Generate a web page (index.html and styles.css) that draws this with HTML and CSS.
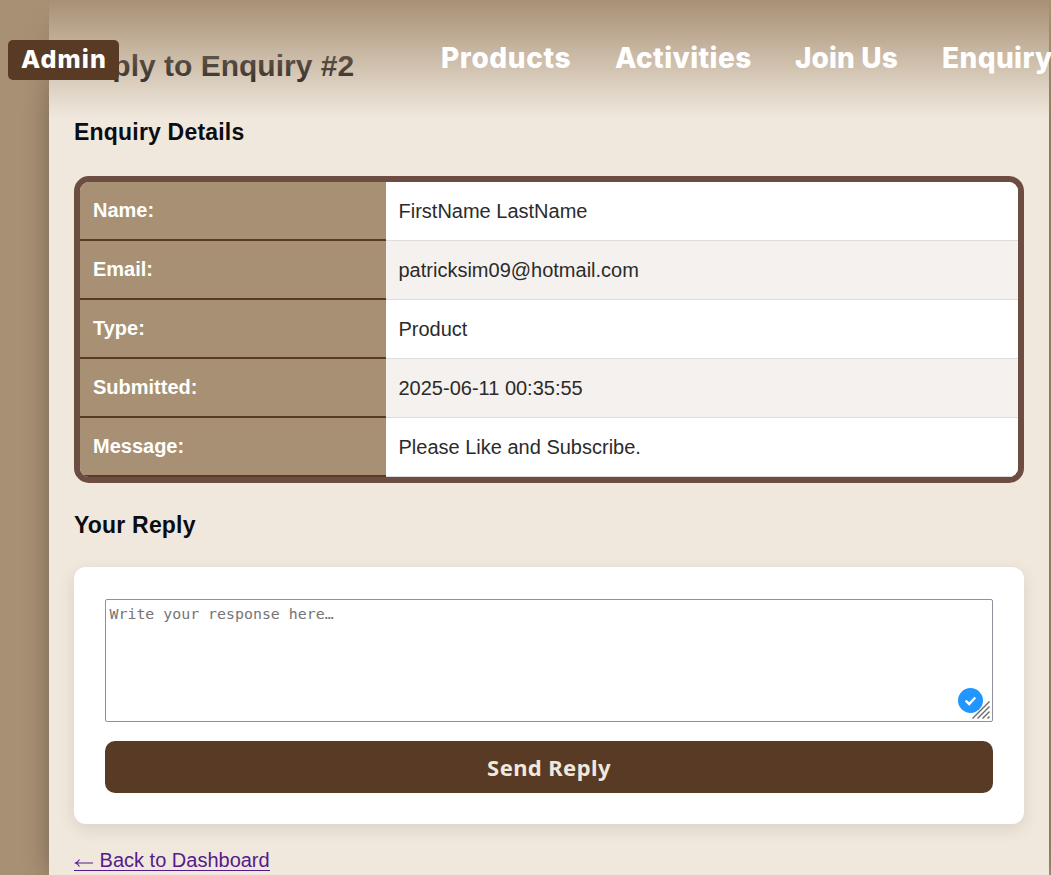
FILE: index.html
```html
<!DOCTYPE html>
<html lang="en">
<head>
<meta charset="utf-8">
<title>Reply to Enquiry</title>
<link rel="stylesheet" href="styles.css">
</head>
<body>
<header class="topbar">
  <a class="admin">Admin</a>
  <nav class="nav">
    <a class="products">Products</a>
    <a class="activities">Activities</a>
    <a class="join">Join Us</a>
    <a class="enquiry">Enquiry</a>
  </nav>
</header>
<main class="page">
  <h1>Reply to Enquiry #2</h1>
  <h2>Enquiry Details</h2>
  <div class="details">
    <div class="label">Name:</div><div class="value">FirstName LastName</div>
    <div class="label">Email:</div><div class="value alt">patricksim09@hotmail.com</div>
    <div class="label">Type:</div><div class="value">Product</div>
    <div class="label">Submitted:</div><div class="value alt">2025-06-11 00:35:55</div>
    <div class="label">Message:</div><div class="value">Please Like and Subscribe.</div>
  </div>
  <h2 class="reply-title">Your Reply</h2>
  <form class="card">
    <div class="field">
      <textarea placeholder="Write your response here…"></textarea>
      <svg class="check" viewBox="0 0 26 26"><circle cx="13.5" cy="13.5" r="12.5" fill="#2196ff"/><path d="M8.7 13.7l3.5 3.4 6-6.6" fill="none" stroke="#fff" stroke-width="2.4"/></svg>
      <svg class="grip" viewBox="0 0 18 18"><path d="M.5 17.5L17.5.5M5.5 17.5l12-12M10.5 17.5l7-7M15.5 17.5l2-2" fill="none" stroke="#69676b" stroke-width="1.4"/></svg>
    </div>
    <button type="button">Send Reply</button>
  </form>
  <a class="back" href="#"><svg class="arrow" viewBox="0 0 20 12"><path d="M1.5 6H19M5.5 2.5Q4 5 1.5 6Q4 7 5.5 9.5" fill="none" stroke="currentColor" stroke-width="1.1"/></svg> Back to Dashboard</a>
</main>
</body>
</html>
```
FILE: styles.css
```css
* { box-sizing: border-box; }
html { overflow: hidden; }
body {
  margin: 0;
  height: 875px;
  overflow: hidden;
  background: #a89074;
  font: 20px/24px "Liberation Sans", Arial, sans-serif;
  color: #2b2b2b;
}
.topbar {
  position: absolute;
  top: 0;
  left: 0;
  z-index: 2;
  display: flex;
  width: 1051px;
  height: 118px;
  padding: 40px 0 0 8px;
  overflow: hidden;
  background: linear-gradient(#a89074, rgba(168, 144, 116, 0));
  font-family: Inter, sans-serif;
  font-weight: 800;
  color: #fff;
  white-space: nowrap;
}
.admin {
  flex: none;
  width: 111px;
  height: 40px;
  padding-left: 13px;
  border-radius: 5px;
  background: #583a25;
  font-size: 25px;
  line-height: 39px;
  letter-spacing: 1.1px;
}
.nav {
  display: grid;
  grid-template-columns: 174px 180px 147px 120px;
  margin-left: 322px;
  font-size: 28px;
  line-height: 37px;
}
.products { letter-spacing: .6px; }
.activities { letter-spacing: .4px; }
.join { letter-spacing: .1px; }
.enquiry { letter-spacing: .4px; }
.page {
  width: 1000px;
  height: 875px;
  margin-left: 49px;
  padding: 48px 25px 0;
  background: #f0e8dd;
  box-shadow: 0 0 25px rgba(0, 0, 0, .3);
}
h1 {
  margin: 0;
  font-size: 30px;
  line-height: 36px;
  color: #0a0d12;
}
h2 {
  margin: 34px 0 30px;
  font-size: 23px;
  line-height: 28px;
  letter-spacing: .2px;
  color: #0a0d12;
}
.details {
  display: grid;
  grid-template-columns: 306px 1fr;
  grid-auto-rows: 59px;
  border: 6px solid #6d4c41;
  border-radius: 15px;
  overflow: hidden;
}
.label {
  padding: 16px 13px;
  border-bottom: 2px solid #583a25;
  background: #a89074;
  color: #fff;
  font-weight: 700;
}
.value {
  padding: 17px 12.5px;
  border-bottom: 1px solid #ddd;
  background: #fff;
}
.alt { background: #f5f1ee; }
.reply-title { margin: 28px 0; }
.card {
  height: 257px;
  padding: 32px 31px;
  border-radius: 12px;
  background: #fff;
  box-shadow: 0 5px 15px rgba(88, 58, 37, .13);
}
.field { position: relative; height: 123px; }
textarea {
  display: block;
  width: 100%;
  height: 123px;
  padding: 4px 3.5px;
  border: 1px solid #8f8f9d;
  border-radius: 2px;
  resize: none;
  font: 14.9px/20px "DejaVu Sans Mono", monospace;
}
textarea::placeholder { color: #757575; }
.check { position: absolute; right: 10px; bottom: 9px; width: 26px; height: 26px; }
.grip { position: absolute; right: 3px; bottom: 3px; width: 18px; height: 18px; }
button {
  display: block;
  width: 100%;
  height: 52px;
  margin-top: 19px;
  padding: 0 0 1px;
  border: 0;
  border-radius: 10px;
  background: #583a25;
  color: #f0e8dd;
  font: 700 22px/30px "Noto Sans", sans-serif;
  letter-spacing: .4px;
}
.back {
  display: inline-block;
  height: 23px;
  margin-top: 24px;
  border-bottom: 1px solid #551a8b;
  color: #551a8b;
  text-decoration: none;
}
.arrow { width: 20px; height: 12px; vertical-align: -2px; }
```
